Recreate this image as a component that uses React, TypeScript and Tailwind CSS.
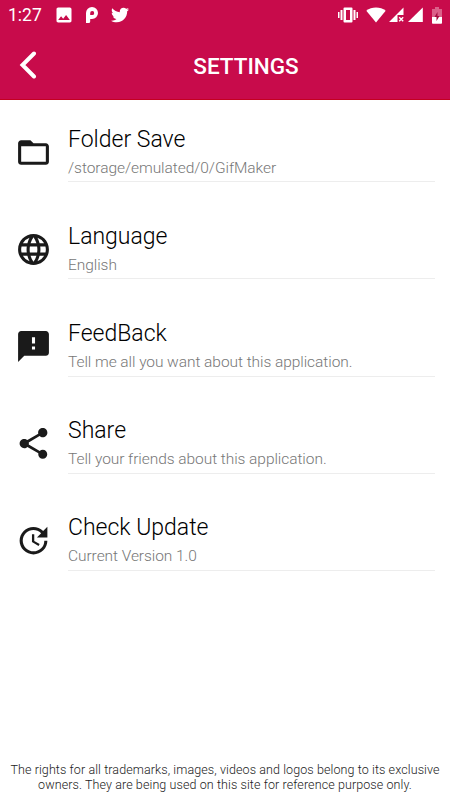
import React from 'react';
import { MdFeedback, MdFolderOpen, MdImage, MdLanguage, MdShare, MdUpdate } from 'react-icons/md';
import { FaTwitter } from 'react-icons/fa';
import type { IconType } from 'react-icons';

interface SettingItem {
  title: string;
  subtitle: string;
  icon: IconType;
}

const settings: SettingItem[] = [
  { title: 'Folder Save', subtitle: '/storage/emulated/0/GifMaker', icon: MdFolderOpen },
  { title: 'Language', subtitle: 'English', icon: MdLanguage },
  { title: 'FeedBack', subtitle: 'Tell me all you want about this application.', icon: MdFeedback },
  { title: 'Share', subtitle: 'Tell your friends about this application.', icon: MdShare },
  { title: 'Check Update', subtitle: 'Current Version 1.0', icon: MdUpdate },
];

const StatusBar: React.FC = () => {
  return (
    <div className="flex h-[30px] items-center pl-2 pr-2">
      <span className="w-[46px] whitespace-nowrap text-[17.5px] leading-[30px]">1:27</span>
      <MdImage className="h-5 w-5" />

      <svg viewBox="0 0 12 16" className="ml-[12px] h-4 w-3" fill="currentColor">
        <path
          fillRule="evenodd"
          d="M0 6a6 6 0 1 1 6 6H4.200v2.500Q4.200 16 2.700 16H0zM4.200 6v2H6a2 2 0 1 0-1.800-2z"
        />
      </svg>
      <FaTwitter className="ml-[13px] h-[18px] w-[18px]" />

      <div className="ml-auto flex items-center">
        {/* vibrate */}
        <svg viewBox="0 0 20 16" className="h-4 w-5" fill="currentColor">
          <path d="M0 5h1.500v6H0zM2.500 3h2v10h-2zM15.500 3h2v10h-2zM18.500 5H20v6h-1.500z" />
          <path fillRule="evenodd" d="M6.500.5h7q1 0 1 1v13q0 1-1 1h-7q-1 0-1-1v-13q0-1 1-1zM8 3v10h4V3z" />
        </svg>
        {/* wifi */}
        <svg viewBox="0 0 20 16" className="ml-[8px] h-4 w-5" fill="currentColor">
          <path d="M10 15.500.3 3.800Q4.500.5 10 .5t9.700 3.300z" />
        </svg>
        {/* sim without signal */}
        <svg viewBox="0 0 16 16" className="ml-[3px] h-4 w-4" fill="currentColor">
          <path d="M0 15 14.500.5V8H8.500v7z" />
          <path d="m10.200 10.200 4 4m0-4-4 4" stroke="currentColor" strokeWidth="1.400" />
        </svg>
        <svg viewBox="0 0 16 16" className="ml-[3px] h-4 w-4" fill="currentColor">
          <path d="M0 15 14.800.5V15z" />
        </svg>
        {/* battery, charging */}
        <svg viewBox="0 0 10 17" className="ml-2 h-[17px] w-[10px]" fill="currentColor">
          <path d="M3 0h4v2h3v8H0V2h3z" opacity=".35" />
          <path d="M0 10h10v6q0 .8-.8.800H.8Q0 16.800 0 16z" />
          <path d="M5.500 5v4H7.500L4.500 14v-4H2.500z" fill="#a30a3e" />
        </svg>
      </div>
    </div>
  );
};

const Header: React.FC = () => {
  return (
    <header className="h-[100px] border-b border-[#c40020] bg-[#c80b4b] text-white">
      <StatusBar />
      <div className="flex h-[70px] items-center">
        <button aria-label="Back" className="flex w-[42px] justify-end pr-[5px]">
          <svg viewBox="0 0 18 28" className="h-7 w-[18px]" fill="none">
            <path d="M15 2.500 3.500 14 15 25.500" stroke="currentColor" strokeWidth="4" strokeLinecap="round" />
          </svg>
        </button>
        <h1 className="flex-1 pt-px text-center text-[22.5px] font-medium leading-7">SETTINGS</h1>
      </div>
    </header>
  );
};

const SettingRow: React.FC<{ item: SettingItem }> = ({ item }) => {
  const Icon = item.icon;

  return (
    <li className="group flex h-[97px] pl-[15px] pr-[15px]">
      <Icon className="mt-[34px] h-[37px] w-[37px] shrink-0 text-[#1a1a1a]" />
      <div className="ml-4 h-[82px] flex-1 border-b border-[#ededed] pt-[25px] group-nth-[n+3]:h-[83px]">
        <h2 className="text-[23px] font-light leading-[30px] text-black">{item.title}</h2>
        <p className="mt-[3px] text-[15.5px] font-light leading-5 tracking-[-0.06px] text-[#777]">{item.subtitle}</p>
      </div>
    </li>
  );
};

const App: React.FC = () => {
  return (
    <div className="flex h-[800px] w-[450px] flex-col overflow-hidden bg-white font-['Roboto',sans-serif]">
      <Header />
      <ul>
        {settings.map((item) => (
          <SettingRow key={item.title} item={item} />
        ))}
      </ul>
      <footer className="mt-auto pb-[8px] text-center text-[12.5px] font-light leading-[15px] tracking-[0.1px] text-[#222]">
        <p>The rights for all trademarks, images, videos and logos belong to its exclusive</p>
        <p>owners. They are being used on this site for reference purpose only.</p>
      </footer>
    </div>
  );
};

export default App;
